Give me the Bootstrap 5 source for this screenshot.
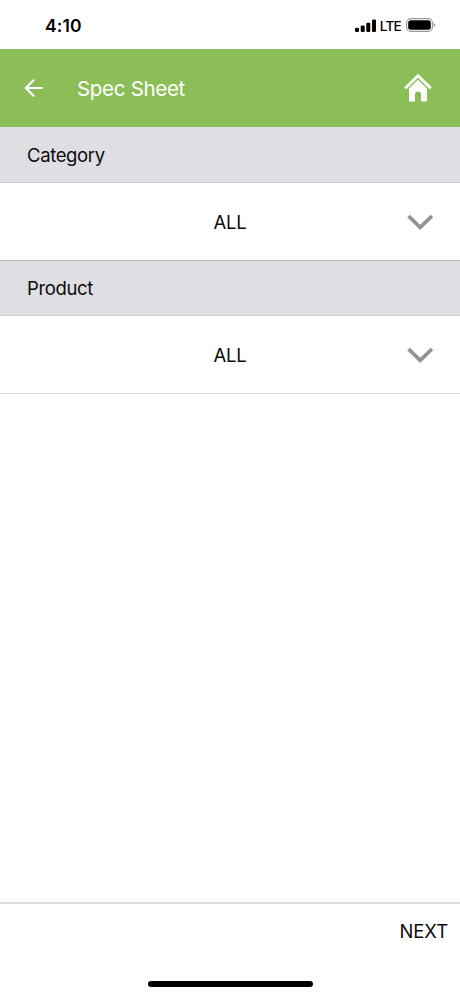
<!DOCTYPE html>
<html lang="en">
<head>
<meta charset="utf-8">
<meta name="viewport" content="width=device-width, initial-scale=1">
<title>Spec Sheet</title>
<link href="https://cdn.jsdelivr.net/npm/bootstrap@5.3.0/dist/css/bootstrap.min.css" rel="stylesheet">
<style>
body { font-family: Inter, "Liberation Sans", sans-serif; color: #0b0b0d; font-size: 18.5px; line-height: 24px; }
svg { display: block; flex: none; }
.screen { height: 996px; overflow: hidden; }
.status { height: 49px; padding: 2px 24px 0 45px; color: #000; }
.clock { font-size: 17.5px; font-weight: 600; letter-spacing: .15px; }
.carrier { font-size: 13.6px; font-weight: 500; letter-spacing: -.75px; margin: 0 5px 0 4px; }
.battery { margin-bottom: 1px; }
.topbar { height: 78px; background: #8bbe56; padding: 0 28px 0 24px; }
.topbar h1 { font-size: 20.5px; line-height: 26px; font-weight: 400; margin-left: 34px; padding-top: 1px; letter-spacing: -.3px; }
.label-bar { height: 56px; background: #dfdee3; border-bottom: 1px solid #cfced2; padding: 0 0 0 27px; font-size: 18.5px; line-height: 24px; font-weight: 400; letter-spacing: -.37px; }
.label-bar.ruled { border-top: 1px solid #b9b9bc; }
.picker { height: 77px; display: grid; grid-template-columns: 1fr auto 1fr; padding: 0 26px; border: 0; background: #fff; color: inherit; letter-spacing: -.3px; }
.picker svg { grid-column: 3; justify-self: end; }
.picker span { grid-column: 2; padding-top: 1px; }
.picker.last { height: 78px; border-bottom: 1px solid #dedede; }
.foot { height: 94px; border-top: 2px solid #dedee0; padding-top: 15px; }
.next { font-size: 18.5px; line-height: 24px; color: inherit; letter-spacing: -.1px; margin-right: 12px; }
.home-bar { width: 165px; height: 6px; background: #000; margin-bottom: 9px; }
</style>
<script src="https://cdn.jsdelivr.net/npm/bootstrap@5.3.0/dist/js/bootstrap.bundle.min.js"></script>
</head>
<body>
<div class="screen d-flex flex-column bg-white">
  <div class="status d-flex align-items-center justify-content-between">
    <span class="clock">4:10</span>
    <div class="d-flex align-items-center">
      <svg width="21" height="14" viewBox="0 0 21 14"><rect x="0" y="8.8" width="4" height="4.2" rx="1.2"/><rect x="5.7" y="6.5" width="4" height="6.5" rx="1.2"/><rect x="11.3" y="3.7" width="4" height="9.3" rx="1.2"/><rect x="17" y="0.5" width="4" height="12.5" rx="1.2"/></svg>
      <span class="carrier">LTE</span>
      <svg class="battery" width="30" height="14" viewBox="0 0 30 14"><rect x=".6" y=".6" width="25.8" height="12.8" rx="4" fill="none" stroke="#999" stroke-width="1.1"/><rect x="2.2" y="2.2" width="22.6" height="9.6" rx="2.5"/><path d="M27.7 4.8q1.6.8 1.6 2.2t-1.6 2.2z" fill="#999"/></svg>
    </div>
  </div>
  <header class="topbar d-flex align-items-center text-white">
    <svg width="19" height="18" viewBox="0 0 19 18" fill="none" stroke="#fff" stroke-width="2.2" stroke-linecap="round" stroke-linejoin="round"><path d="M18 9H1.8M9.500 1.300 1.800 9l7.700 7.700"/></svg>
    <h1 class="mb-0">Spec Sheet</h1>
    <svg class="ms-auto" width="28" height="28" viewBox="0 0 28 28"><path d="M1.200 14.200 14 1.800l12.800 12.400" fill="none" stroke="#fff" stroke-width="2.900"/><path d="M14 5.700 23 14.500V27.500H17V20.500a3 3 0 0 0-6 0V27.500H5V14.500Z" fill="#fff"/></svg>
  </header>
  <main class="flex-grow-1 d-flex flex-column">
    <h2 class="label-bar d-flex align-items-center mb-0">Category</h2>
    <button class="picker align-items-center" type="button"><span>ALL</span>
      <svg width="28" height="18" viewBox="0 0 28 18" fill="none" stroke="#919497" stroke-width="3.800"><path d="M2.500 3 14.200 14.300 25.900 3"/></svg></button>
    <h2 class="label-bar ruled d-flex align-items-center mb-0">Product</h2>
    <button class="picker last align-items-center" type="button"><span>ALL</span>
      <svg width="28" height="18" viewBox="0 0 28 18" fill="none" stroke="#919497" stroke-width="3.800"><path d="M2.500 3 14.200 14.300 25.900 3"/></svg></button>
  </main>
  <footer class="foot d-flex flex-column justify-content-between">
    <button class="next btn p-0 border-0 rounded-0 align-self-end" type="button">NEXT</button>
    <div class="home-bar rounded-pill align-self-center"></div>
  </footer>
</div>
</body>
</html>
